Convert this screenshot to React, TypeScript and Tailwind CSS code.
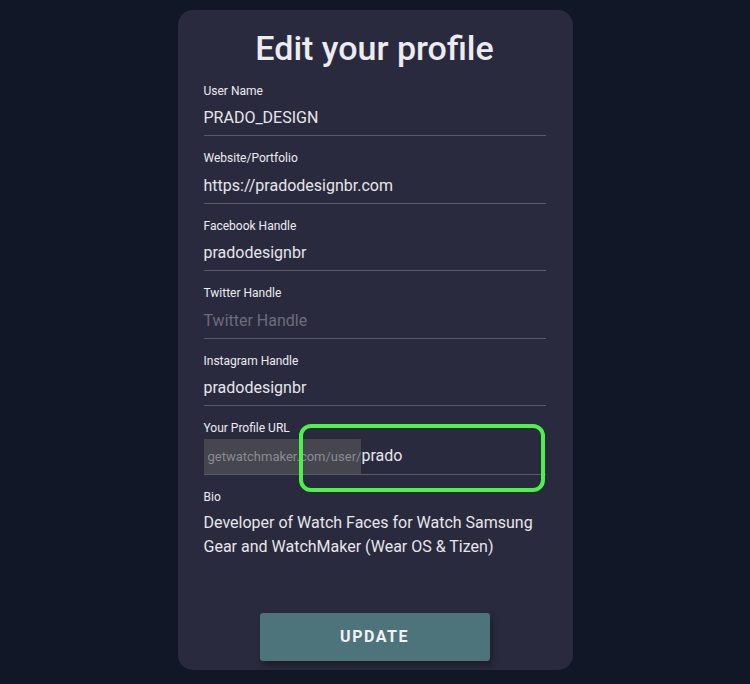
import React from "react";

type Field = {
  label: string;
  value: string;
  placeholder?: string;
};

const fields: Field[] = [
  { label: "User Name", value: "PRADO_DESIGN" },
  { label: "Website/Portfolio", value: "https://pradodesignbr.com" },
  { label: "Facebook Handle", value: "pradodesignbr" },
  { label: "Twitter Handle", value: "", placeholder: "Twitter Handle" },
  { label: "Instagram Handle", value: "pradodesignbr" },
];

function TextField({ label, value, placeholder }: Field) {
  return (
    <div>
      <label className="block text-[12px] leading-4 text-[#ececf0]">{label}</label>
      <div className="mt-[7.5px] border-b border-[#5a5a6a] pb-[5px]">
        {value ? (
          <span className="block text-base leading-6 text-[#e6e6ea]">{value}</span>
        ) : (
          <span className="block text-base leading-6 text-[#6c6c7c]">{placeholder}</span>
        )}
      </div>
    </div>
  );
}

export default function App() {
  return (
    <div
      className="flex min-h-[684px] justify-center bg-[#121727] pt-[10px]"
      style={{ fontFamily: "Roboto, 'Noto Sans', sans-serif" }}
    >
      <div className="flex h-[660px] w-[395px] flex-col rounded-[15px] bg-[#2a2a3e] pl-[26px] pr-[27px] pt-[17.5px] pb-[9px]">
        <h1 className="text-center text-[34px] font-medium leading-10 text-[#ececf0]">
          Edit your profile
        </h1>

        <div className="mt-[15px] flex flex-col gap-[14px]">
          {fields.map((f) => (
            <TextField key={f.label} {...f} />
          ))}

          <div className="relative">
            <label className="block text-[12px] leading-4 text-[#ececf0]">Your Profile URL</label>
            <div className="mt-[2px] flex items-baseline border-b border-[#5a5a6a]">
              <span className="bg-[#46464e] pl-1 pt-[5.5px] pb-[5px] text-[13px] leading-6 text-[#8b8b92]">
                getwatchmaker.com/user/
              </span>
              <span className="pt-[5.5px] pb-[5px] text-base leading-6 text-[#e6e6ea]">prado</span>
            </div>
            <div className="pointer-events-none absolute left-[95px] top-[4px] h-[68px] w-[246px] rounded-[12px] border-[4.5px] border-[#4cf24a]" />
          </div>
        </div>

        <div className="mt-[14.5px]">
          <label className="block text-[12px] leading-4 text-[#ececf0]">Bio</label>
          <p className="mt-[5.5px] text-base leading-6 text-[#e6e6ea]">
            Developer of Watch Faces for Watch Samsung Gear and WatchMaker (Wear OS &amp; Tizen)
          </p>
        </div>

        <div className="mt-auto flex justify-center">
          <button
            type="button"
            className="h-[48px] w-[230px] rounded-[3px] bg-[#4d747b] text-base font-bold tracking-[1.5px] text-[#f2f2f4] shadow-[2px_4px_6px_rgba(0,0,0,0.35)]"
          >
            UPDATE
          </button>
        </div>
      </div>
    </div>
  );
}
